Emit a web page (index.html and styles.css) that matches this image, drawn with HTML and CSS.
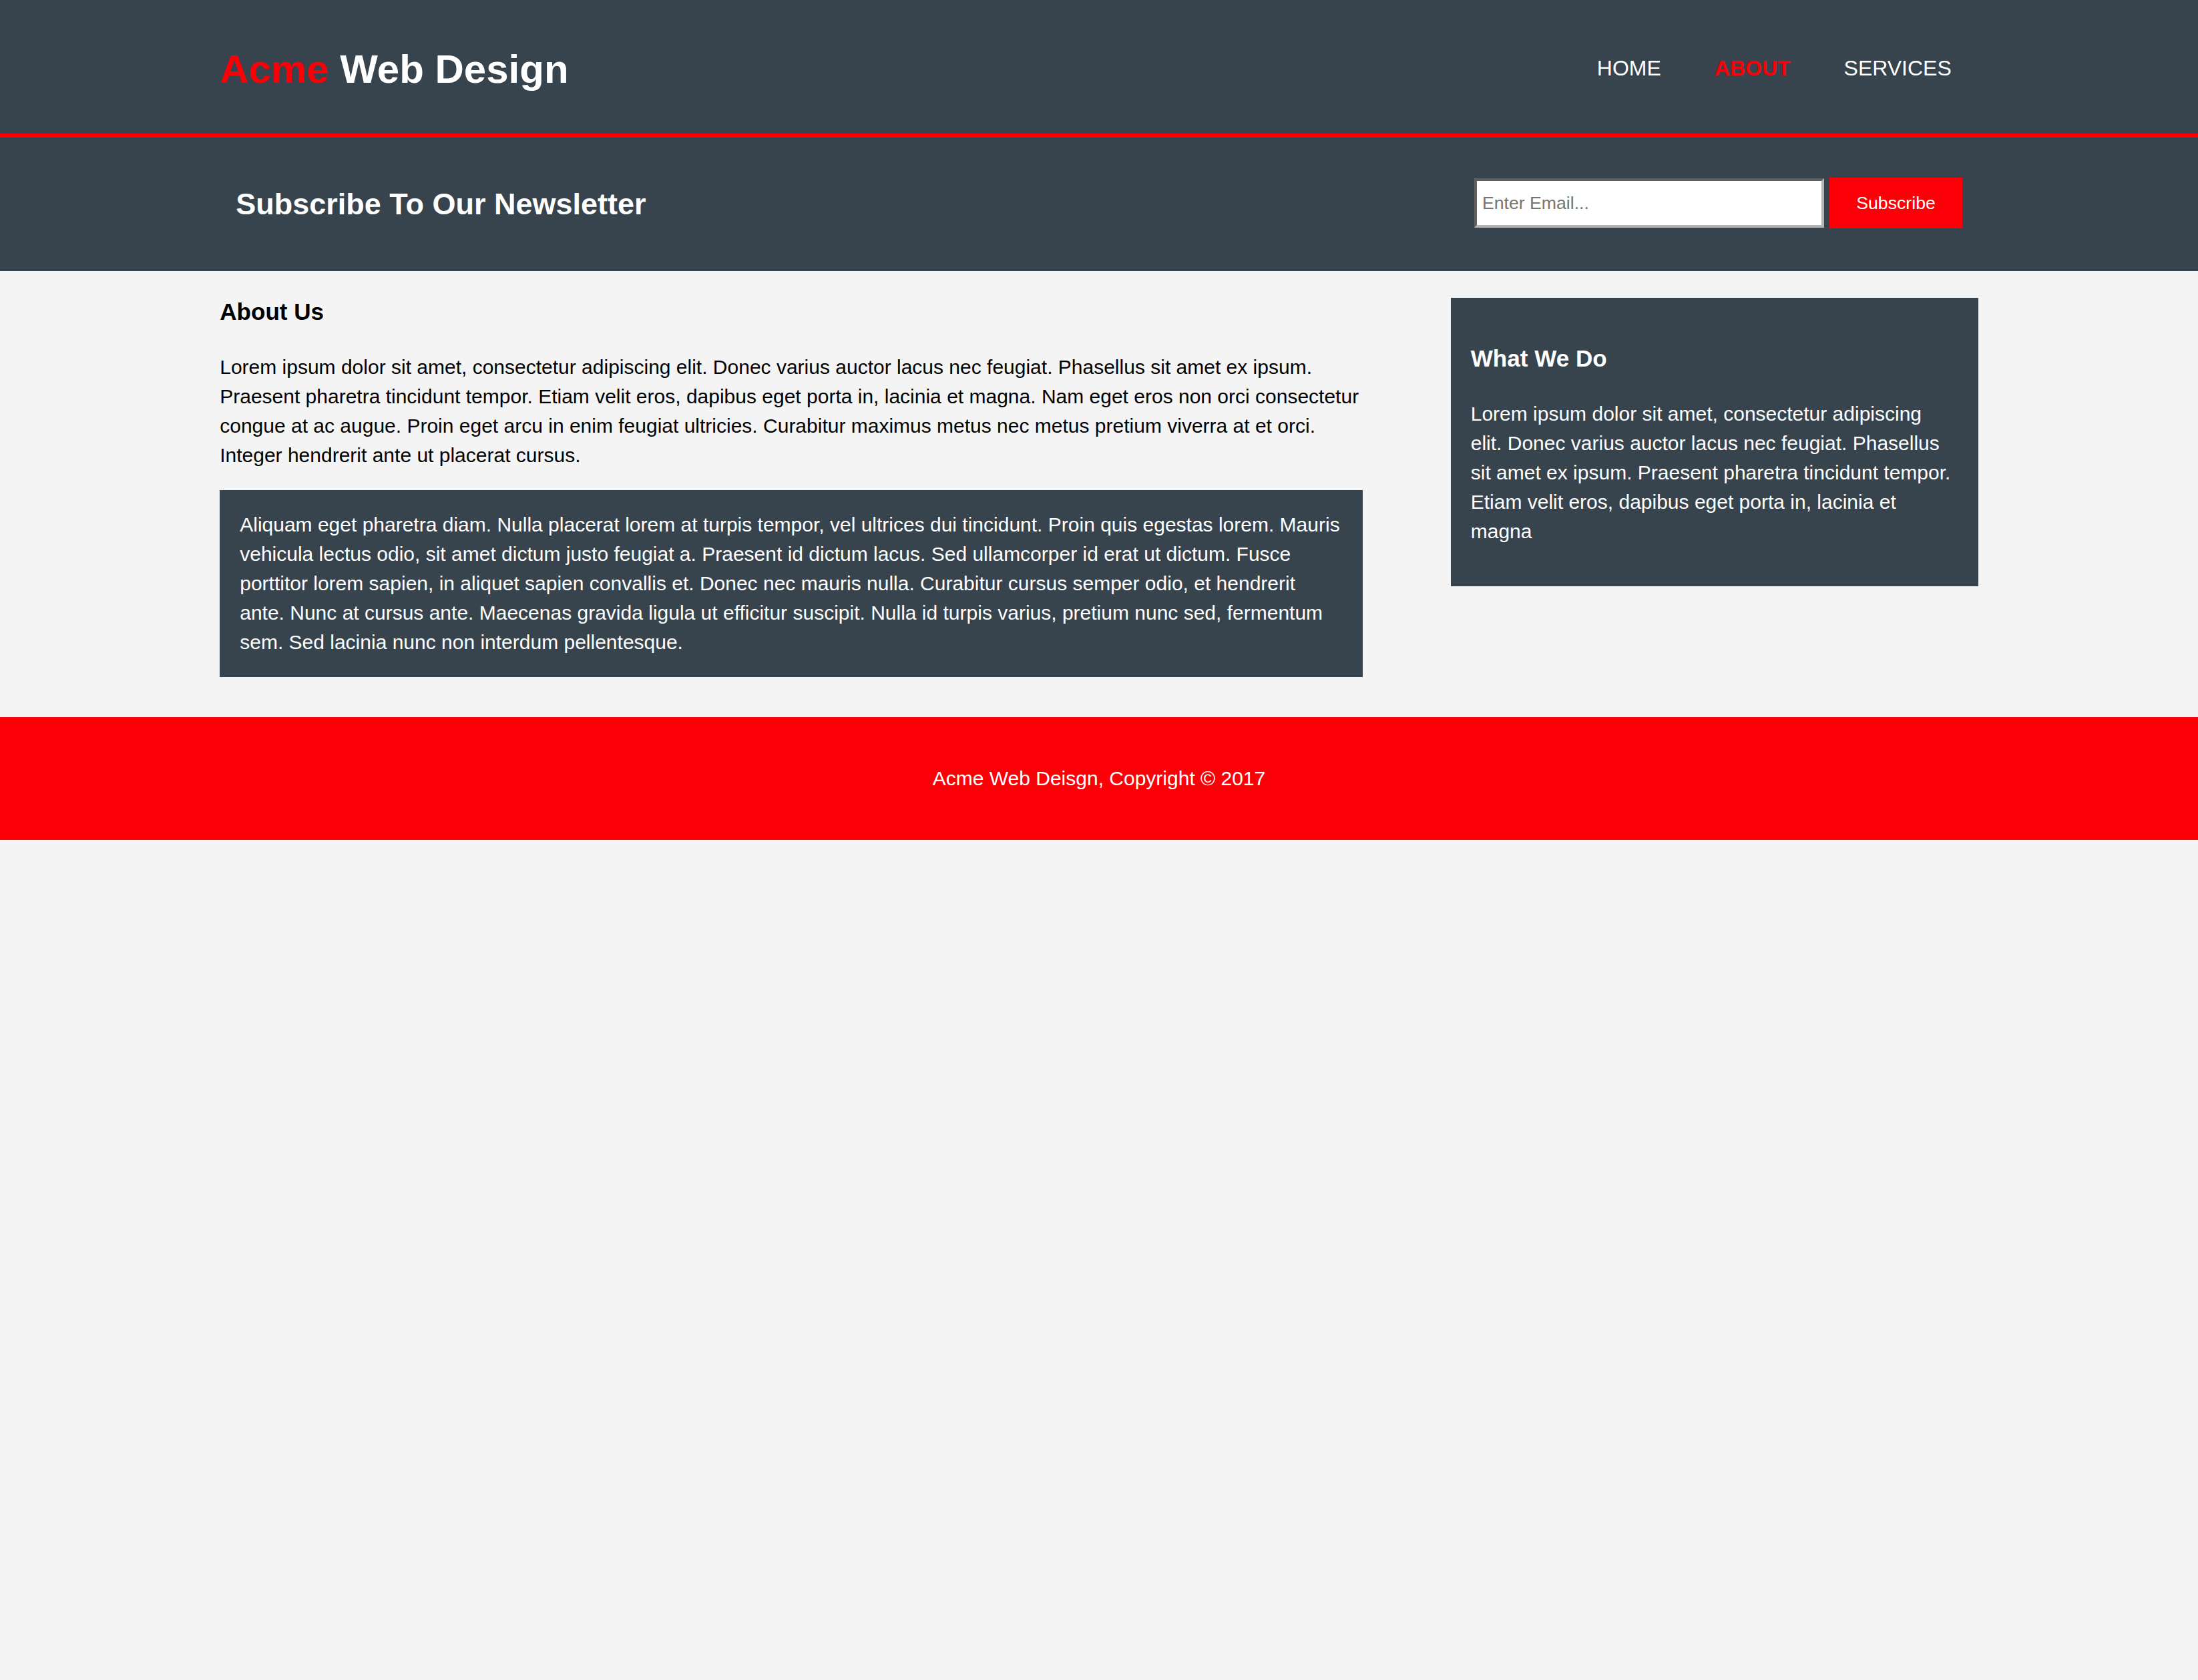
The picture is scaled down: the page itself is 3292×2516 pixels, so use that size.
FILE: index.html
```html
<!DOCTYPE html>
<html lang="en">
<head>
<meta charset="utf-8">
<title>Acme Web Design | About</title>
<link rel="stylesheet" href="styles.css">
</head>
<body>
<header class="site-header">
  <div class="container header-inner">
    <div class="branding">
      <h1><span class="highlight">Acme</span> Web Design</h1>
    </div>
    <nav class="main-nav">
      <ul>
        <li><a href="#">Home</a></li>
        <li class="current"><a href="#">About</a></li>
        <li><a href="#">Services</a></li>
      </ul>
    </nav>
  </div>
</header>

<section class="newsletter">
  <div class="container newsletter-inner">
    <h2>Subscribe To Our Newsletter</h2>
    <form class="newsletter-form">
      <input type="email" placeholder="Enter Email..."> <button type="submit" class="button-1">Subscribe</button>
    </form>
  </div>
</section>

<section class="main">
  <div class="container main-inner">
    <article class="main-col">
      <h3 class="page-title">About Us</h3>
      <p>Lorem ipsum dolor sit amet, consectetur adipiscing elit. Donec varius auctor lacus nec feugiat. Phasellus sit amet ex ipsum. Praesent pharetra tincidunt tempor. Etiam velit eros, dapibus eget porta in, lacinia et magna. Nam eget eros non orci consectetur congue at ac augue. Proin eget arcu in enim feugiat ultricies. Curabitur maximus metus nec metus pretium viverra at et orci. Integer hendrerit ante ut placerat cursus.</p>
      <p class="dark">Aliquam eget pharetra diam. Nulla placerat lorem at turpis tempor, vel ultrices dui tincidunt. Proin quis egestas lorem. Mauris vehicula lectus odio, sit amet dictum justo feugiat a. Praesent id dictum lacus. Sed ullamcorper id erat ut dictum. Fusce porttitor lorem sapien, in aliquet sapien convallis et. Donec nec mauris nulla. Curabitur cursus semper odio, et hendrerit ante. Nunc at cursus ante. Maecenas gravida ligula ut efficitur suscipit. Nulla id turpis varius, pretium nunc sed, fermentum sem. Sed lacinia nunc non interdum pellentesque.</p>
    </article>
    <aside class="sidebar">
      <div class="dark">
        <h3>What We Do</h3>
        <p>Lorem ipsum dolor sit amet, consectetur adipiscing elit. Donec varius auctor lacus nec feugiat. Phasellus sit amet ex ipsum. Praesent pharetra tincidunt tempor. Etiam velit eros, dapibus eget porta in, lacinia et magna</p>
      </div>
    </aside>
  </div>
</section>

<footer class="site-footer">
  <p>Acme Web Deisgn, Copyright &copy; 2017</p>
</footer>
</body>
</html>
```

FILE: styles.css
```css
body {
  font-family: "Liberation Sans", Arial, Helvetica, sans-serif;
  font-size: 30px;
  line-height: 44px;
  padding: 0;
  margin: 0;
  background-color: #f4f4f4;
}

.container {
  width: 80%;
  margin: 0 auto;
}

ul {
  margin: 0;
  padding: 0;
  list-style: none;
}

/* Header */
.site-header {
  background: #37434d;
  color: #ffffff;
  padding-top: 60px;
  min-height: 140px;
  border-bottom: 6px solid #fc0007;
}

.header-inner {
  display: flex;
  justify-content: space-between;
  align-items: flex-start;
}

.branding h1 {
  margin: 0;
  font-size: 60px;
  line-height: 88px;
}

.highlight {
  color: #fc0007;
  font-weight: bold;
}

.main-nav {
  margin-top: 18px;
}

.main-nav ul {
  display: flex;
}

.main-nav li {
  padding: 0 40px;
}

.main-nav a {
  color: #ffffff;
  text-decoration: none;
  text-transform: uppercase;
  font-size: 32px;
  line-height: 48px;
}

.main-nav .current a {
  color: #fc0007;
  font-weight: bold;
}

/* Newsletter */
.newsletter {
  padding: 30px;
  color: #ffffff;
  background: #37434d;
}

.newsletter-inner {
  display: flex;
  justify-content: space-between;
  align-items: flex-start;
}

.newsletter h2 {
  font-size: 45px;
  margin: 37px 0;
  line-height: 66px;
}

.newsletter-form {
  margin-top: 30px;
}

.newsletter-form input[type="email"] {
  padding: 8px;
  height: 50px;
  width: 500px;
  border: 4px inset #b4b4b4;
  font-family: "Liberation Sans", Arial, sans-serif;
  font-size: 26.67px;
  vertical-align: baseline;
}

.newsletter-form input::placeholder {
  color: #757575;
}

.button-1 {
  height: 76px;
  background: #fc0007;
  border: 0;
  padding-left: 40px;
  padding-right: 40px;
  color: #ffffff;
  font-family: "Liberation Sans", Arial, sans-serif;
  font-size: 26.67px;
}

/* Main */
.main-inner {
  display: flex;
  justify-content: space-between;
  align-items: flex-start;
}

.main-col {
  width: 65%;
}

.sidebar {
  width: 30%;
  margin-top: 20px;
}

h3 {
  font-size: 35.1px;
  line-height: 52px;
  margin: 35px 0;
}

.main p {
  margin: 30px 0;
}

.dark {
  padding: 30px;
  background: #37434d;
  color: #ffffff;
}

.main p.dark,
.sidebar .dark {
  margin-top: 20px;
  margin-bottom: 20px;
}

/* Footer */
.site-footer {
  padding: 40px;
  margin-top: 40px;
  color: #ffffff;
  background-color: #fc0007;
  text-align: center;
}

.site-footer p {
  margin: 30px 0;
}
```
